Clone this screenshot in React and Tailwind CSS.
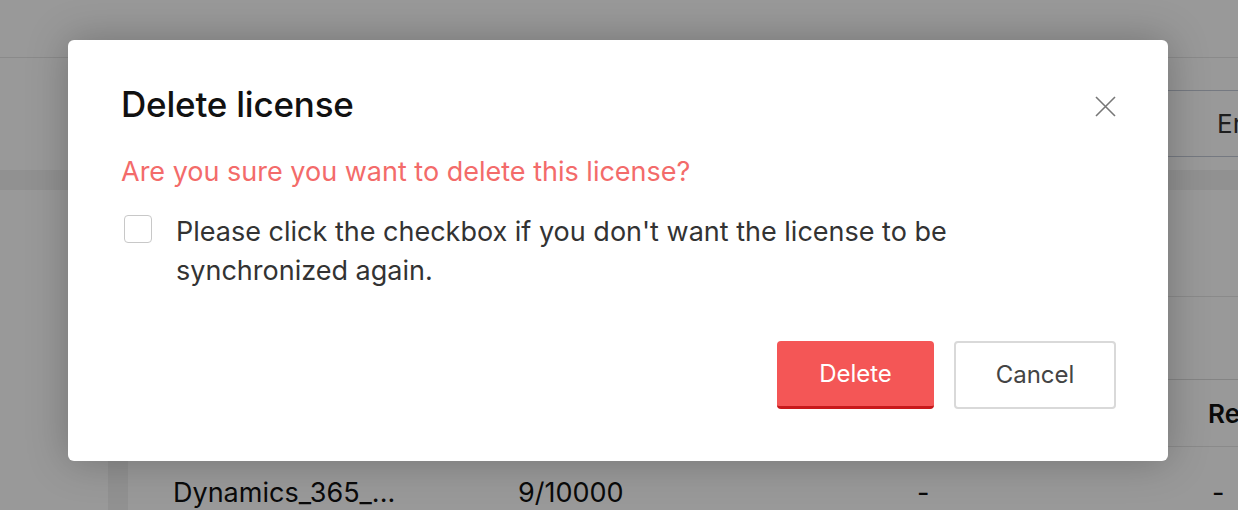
export default function App() {
  return (
    <div className="relative w-[1238px] h-[510px] overflow-hidden bg-white" style={{ fontFamily: "Inter, 'Noto Sans', sans-serif" }}>
      {/* underlying page */}
      <div className="h-[58px] border-b border-[#e6e6e6] bg-white" />
      <div className="flex h-[112px] items-start justify-end bg-white pt-[32px]">
        <div className="flex h-[67px] w-[200px] items-center overflow-hidden whitespace-nowrap border-y border-[#c3cad8] pl-[179px] text-[26px] text-[#333]">
          Enable
        </div>
      </div>
      <div className="flex h-[340px] bg-[#f2f2f2] pt-[20px]">
        <div className="w-[108px] shrink-0 bg-white" />
        <div className="ml-[20px] min-w-0 flex-1 overflow-hidden bg-white">
          <div className="h-[107px] border-b border-[#e6e6e6]" />
          <div className="h-[83px] border-b border-[#dcdcdc]" />
          <div className="flex h-[67px] items-center border-b border-[#e6e6e6] text-[26px] font-semibold text-[#111]">
            <span className="ml-[1080px] shrink-0 whitespace-nowrap">Results</span>
          </div>
          <div className="flex h-[92px] items-center whitespace-nowrap text-[27px] text-[#111]">
            <span className="ml-[45px] w-[345px] shrink-0">Dynamics_365_...</span>
            <span className="w-[399px] shrink-0">9/10000</span>
            <span className="w-[295px] shrink-0">-</span>
            <span className="shrink-0">-</span>
          </div>
        </div>
      </div>

      {/* overlay */}
      <div className="absolute inset-0 bg-black/40" />

      {/* modal */}
      <div className="absolute left-[68px] top-[40px] flex h-[421px] w-[1100px] flex-col rounded-[6px] bg-white pl-[53px] pr-[52px] shadow-[0_0_40px_rgba(0,0,0,0.25)]">
        <div className="flex items-start justify-between pt-[38px]">
          <h2 className="text-[35px] font-medium leading-[52px] tracking-[-0.2px] text-[#111]">Delete license</h2>
          <button className="mt-[18px] h-[21px] w-[21px] text-[#777]">
            <svg viewBox="0 0 21 21" width="21" height="21" fill="none" stroke="currentColor" strokeWidth="1.6">
              <path d="M1 1L20 20M20 1L1 20" />
            </svg>
          </button>
        </div>
        <p className="mt-[24px] text-[27px] leading-[36px] text-[#f36b6a]">Are you sure you want to delete this license?</p>
        <div className="mt-[22px] flex items-start">
          <span className="mt-[3px] ml-[3px] h-[28px] w-[28px] shrink-0 rounded-[4px] border border-[#c8c8c8] bg-white" />
          <p className="ml-[24px] w-[820px] text-[27px] leading-[39px] text-[#333]">
            Please click the checkbox if you don't want the license to be synchronized again.
          </p>
        </div>
        <div className="mt-auto mb-[52px] flex justify-end gap-[20px]">
          <button className="h-[68px] w-[157px] rounded-[4px] border-b-[3px] border-[#c8191b] bg-[#f45656] text-[24px] text-white">Delete</button>
          <button className="h-[68px] w-[162px] rounded-[4px] border-2 border-[#d9d9d9] bg-white text-[24px] text-[#444]">Cancel</button>
        </div>
      </div>
    </div>
  );
}
